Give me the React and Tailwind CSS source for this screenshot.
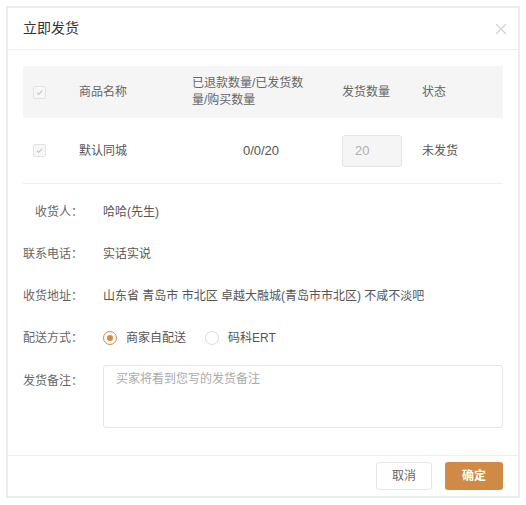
import React, { useState } from "react";

function Check() {
  return (
    <span className="flex h-[13px] w-[13px] items-center justify-center rounded-[2px] border border-[#e3e3e3] bg-[#f7f7f7]">
      <svg width="9" height="9" viewBox="0 0 10 10" fill="none">
        <path d="M2 5.2l2 2 4-4.4" stroke="#c8c8c8" strokeWidth="1.3" />
      </svg>
    </span>
  );
}

function Radio({ checked, label, onClick }) {
  return (
    <button type="button" onClick={onClick} className="flex items-center gap-[9px]">
      <span
        className={
          checked
            ? "flex h-[14px] w-[14px] items-center justify-center rounded-full border border-[#cf8a46] bg-white"
            : "flex h-[14px] w-[14px] items-center justify-center rounded-full border border-[#dcdcdc] bg-white"
        }
      >
        {checked && <span className="h-[6px] w-[6px] rounded-full bg-[#cf8a46]" />}
      </span>
      <span>{label}</span>
    </button>
  );
}

function Label({ children, className = "" }) {
  return (
    <div className={"w-[80px] shrink-0 whitespace-nowrap pr-[20px] text-right text-[#666] " + className}>
      {children}：
    </div>
  );
}

function Row({ label, children }) {
  return (
    <div className="flex h-[42px] items-center">
      <Label>{label}</Label>
      <div className="whitespace-nowrap text-[#555]">{children}</div>
    </div>
  );
}

export default function App() {
  const [mode, setMode] = useState("self");

  return (
    <div
      className="h-[505px] w-[526px] bg-white p-[6px] text-[12px]"
      style={{ fontFamily: '"Liberation Sans", "Noto Sans CJK SC", sans-serif' }}
    >
      <div className="flex h-[492px] flex-col border-2 border-[#ececec] bg-white">
        <div className="flex h-[42px] items-center justify-between border-b border-[#eeeeee] pl-[15px] pr-[11px]">
          <h1 className="text-[14px] text-[#333]">立即发货</h1>
          <svg width="12" height="12" viewBox="0 0 12 12" fill="none">
            <path d="M1 1l10 10M11 1L1 11" stroke="#d0d0d0" strokeWidth="1.1" />
          </svg>
        </div>

        <div className="flex-1 px-[15px] pt-[16px]">
          <div className="flex h-[52px] items-center bg-[#f5f5f5] text-[#666]">
            <div className="w-[46px] pl-[10px]"><Check /></div>
            <div className="w-[113px] pl-[10px]">商品名称</div>
            <div className="w-[150px] pl-[10px] leading-[17px]">
              <span className="block w-[120px]">已退款数量/已发货数量/购买数量</span>
            </div>
            <div className="w-[80px] pl-[10px]">发货数量</div>
            <div className="pl-[10px]">状态</div>
          </div>
          <div className="flex h-[66px] items-center border-b border-[#eeeeee] text-[#555]">
            <div className="w-[46px] pl-[10px]"><Check /></div>
            <div className="w-[113px] pl-[10px]">默认同城</div>
            <div className="w-[150px] pl-[8px] text-center text-[13px]">0/0/20</div>
            <div className="w-[80px] pl-[10px]">
              <input
                disabled
                value="20"
                className="h-[32px] w-[60px] rounded-[3px] border border-[#e6e6e6] bg-[#f5f5f5] pl-[12px] text-[13px] text-[#b0b0b0]"
                readOnly
              />
            </div>
            <div className="pl-[10px]">未发货</div>
          </div>

          <div className="mt-[7px]">
            <Row label="收货人">哈哈(先生)</Row>
            <Row label="联系电话">实话实说</Row>
            <Row label="收货地址">山东省 青岛市 市北区 卓越大融城(青岛市市北区) 不咸不淡吧</Row>
            <div className="flex h-[42px] items-center">
              <Label>配送方式</Label>
              <div className="flex items-center gap-[19px] text-[#555]">
                <Radio checked={mode === "self"} label="商家自配送" onClick={() => setMode("self")} />
                <Radio checked={mode === "ert"} label="码科ERT" onClick={() => setMode("ert")} />
              </div>
            </div>
            <div className="mt-[6px] flex">
              <Label className="pt-[7px]">发货备注</Label>
              <textarea
                placeholder="买家将看到您写的发货备注"
                className="h-[63px] min-w-0 flex-1 resize-none rounded-[3px] border border-[#e6e6e6] px-[12px] py-[4px] text-[12px] text-[#555] outline-none placeholder:text-[#aaa]"
              />
            </div>
          </div>
        </div>

        <div className="flex h-[41px] items-center justify-end gap-[13px] border-t border-[#eeeeee] px-[15px]">
          <button className="h-[28px] w-[56px] rounded-[3px] border border-[#e6e6e6] bg-white text-[#666]">
            取消
          </button>
          <button className="h-[28px] w-[58px] rounded-[3px] bg-[#cf8a46] font-bold text-white">
            确定
          </button>
        </div>
      </div>
    </div>
  );
}
